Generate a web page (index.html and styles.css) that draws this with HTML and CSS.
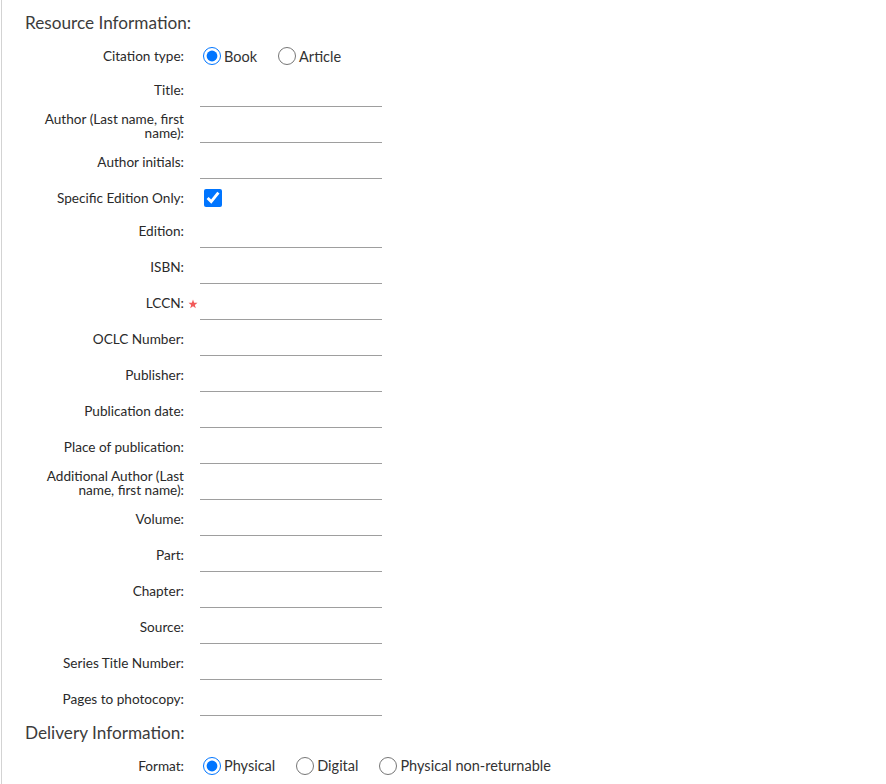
FILE: index.html
```html
<!DOCTYPE html>
<html lang="en">
<head>
<meta charset="utf-8">
<title>Resource Information</title>
<link rel="stylesheet" href="styles.css">
</head>
<body>
<div class="panel">
  <h2 class="section-title first">Resource Information:</h2>
  <div class="row choice-row">
    <span class="label">Citation type:</span>
    <div class="options">
      <label class="opt"><input type="radio" name="ct" checked><span>Book</span></label>
      <label class="opt"><input type="radio" name="ct"><span>Article</span></label>
    </div>
  </div>
  <div class="row"><span class="label">Title:</span><input class="field" type="text"></div>
  <div class="row"><span class="label">Author (Last name, first<br>name):</span><input class="field" type="text"></div>
  <div class="row"><span class="label">Author initials:</span><input class="field" type="text"></div>
  <div class="row check-row"><span class="label">Specific Edition Only:</span><div class="options"><input class="check" type="checkbox" checked></div></div>
  <div class="row"><span class="label">Edition:</span><input class="field" type="text"></div>
  <div class="row"><span class="label">ISBN:</span><input class="field" type="text"></div>
  <div class="row"><span class="label">LCCN:<svg class="req" viewBox="0 0 10 10" width="10" height="10"><path d="M5 0.6 L6.15 3.75 L9.5 3.85 L6.85 5.9 L7.8 9.2 L5 7.25 L2.2 9.2 L3.15 5.9 L0.5 3.85 L3.85 3.75 Z" fill="#f25a5a"/></svg></span><input class="field" type="text"></div>
  <div class="row"><span class="label">OCLC Number:</span><input class="field" type="text"></div>
  <div class="row"><span class="label">Publisher:</span><input class="field" type="text"></div>
  <div class="row"><span class="label">Publication date:</span><input class="field" type="text"></div>
  <div class="row"><span class="label">Place of publication:</span><input class="field" type="text"></div>
  <div class="row"><span class="label">Additional Author (Last<br>name, first name):</span><input class="field" type="text"></div>
  <div class="row"><span class="label">Volume:</span><input class="field" type="text"></div>
  <div class="row"><span class="label">Part:</span><input class="field" type="text"></div>
  <div class="row"><span class="label">Chapter:</span><input class="field" type="text"></div>
  <div class="row"><span class="label">Source:</span><input class="field" type="text"></div>
  <div class="row"><span class="label">Series Title Number:</span><input class="field" type="text"></div>
  <div class="row"><span class="label">Pages to photocopy:</span><input class="field" type="text"></div>
  <h2 class="section-title">Delivery Information:</h2>
  <div class="row format-row">
    <span class="label">Format:</span>
    <div class="options">
      <label class="opt"><input type="radio" name="fmt" checked><span>Physical</span></label>
      <label class="opt"><input type="radio" name="fmt"><span>Digital</span></label>
      <label class="opt"><input type="radio" name="fmt"><span>Physical non-returnable</span></label>
    </div>
  </div>
</div>
</body>
</html>
```
FILE: styles.css
```css
html, body {
  margin: 0;
  padding: 0;
  background: #fff;
}
body {
  font-family: "Lato", "Liberation Sans", sans-serif;
  color: #333;
  font-size: 13.6px;
}
.panel {
  margin-left: 1px;
  border-left: 1px solid #d3d3d3;
  min-height: 784px;
  box-sizing: border-box;
  padding-left: 22px;
}
.section-title {
  margin: 5px 0 0 0;
  padding-left: 1px;
  font-size: 17.2px;
  font-weight: normal;
  line-height: 24px;
  color: #3c3c3c;
}
.section-title.first {
  margin-top: 0;
  padding-top: 11px;
  padding-bottom: 5px;
}
.row {
  display: grid;
  grid-template-columns: 160px 182px;
  column-gap: 16px;
  align-items: center;
  height: 36px;
}
.label {
  position: relative;
  text-align: right;
  line-height: 14px;
  padding-top: 1px;
  color: #2a2a2a;
}
.req {
  position: absolute;
  left: calc(100% + 4px);
  top: 4px;
}
.field {
  align-self: stretch;
  box-sizing: border-box;
  height: 36px;
  margin: 0;
  padding: 0 4px;
  border: none;
  border-bottom: 1px solid #9e9e9e;
  background: transparent;
  font: inherit;
  outline: none;
}
.choice-row {
  height: 31px;
  grid-template-columns: 160px auto;
}
.check-row {
  height: 33px;
  grid-template-columns: 160px auto;
  padding-top: 4px;
  box-sizing: border-box;
}
.format-row {
  height: 38px;
  grid-template-columns: 160px auto;
  padding-top: 2px;
  box-sizing: border-box;
}
.options {
  display: flex;
  align-items: center;
  gap: 21px;
  padding-top: 1px;
  padding-left: 3px;
}
.opt {
  display: flex;
  align-items: center;
  gap: 3px;
  font-size: 14.5px;
  color: #333;
}
.opt input {
  width: 18px;
  height: 18px;
  margin: 0;
}
.check {
  width: 18px;
  height: 18px;
  margin: 0 0 0 1px;
}
```
